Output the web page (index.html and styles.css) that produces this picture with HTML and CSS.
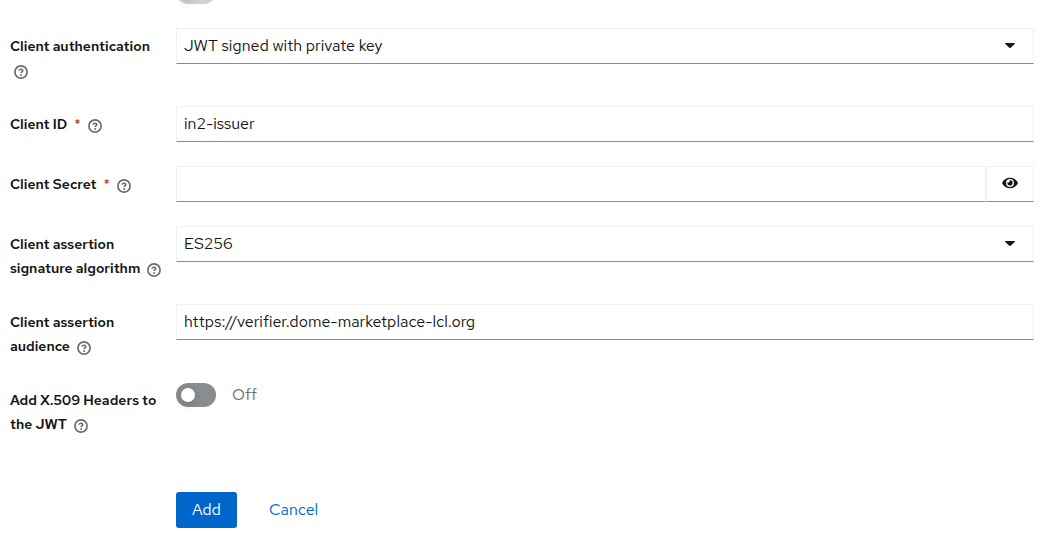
FILE: index.html
```html
<!DOCTYPE html>
<html lang="en">
<head>
<meta charset="utf-8">
<title>Add identity provider</title>
<link rel="stylesheet" href="styles.css">
</head>
<body>
<svg class="sprite" aria-hidden="true">
  <symbol id="help" viewBox="0 0 14 14">
    <circle cx="7" cy="7" r="6.1" fill="none" stroke="currentColor" stroke-width="1.7"/>
    <path d="M5 5.7C5.2 4.6 6 4.2 7 4.2C8 4.2 8.8 4.8 8.8 5.6C8.8 6.8 7.1 6.7 7.1 8.1" fill="none" stroke="currentColor" stroke-width="1.6"/>
    <circle cx="7.1" cy="9.9" r="1" fill="currentColor"/>
  </symbol>
  <symbol id="caret" viewBox="0 0 10 5">
    <path d="M.6 0H9.4Q10.3.2 9.7 1L5.7 4.7Q5 5.3 4.3 4.7L.3 1Q-.3.2.6 0Z" fill="currentColor"/>
  </symbol>
  <symbol id="eye" viewBox="0 0 576 512">
    <path fill="currentColor" d="M572.52 241.4C518.29 135.59 410.93 64 288 64S57.68 135.64 3.48 241.41a32.35 32.35 0 0 0 0 29.19C57.71 376.41 165.07 448 288 448s230.32-71.64 284.52-177.41a32.35 32.35 0 0 0 0-29.19zM288 400a144 144 0 1 1 144-144 143.93 143.93 0 0 1-144 144zm0-240a95.31 95.31 0 0 0-25.31 3.79 47.85 47.85 0 0 1-66.9 66.9A95.78 95.78 0 1 0 288 160z"/>
  </symbol>
</svg>
<form class="form">
  <div class="row">
    <div class="control"><input class="switch" type="checkbox" aria-label="Setting" disabled></div>
  </div>
  <div class="row">
    <div class="label"><label for="auth">Client authentication</label> <button class="help" type="button" aria-label="Help"><svg><use href="#help"/></svg></button></div>
    <div class="control select">
      <select class="field" id="auth"><option>JWT signed with private key</option></select>
      <svg class="caret"><use href="#caret"/></svg>
    </div>
  </div>
  <div class="row">
    <div class="label"><label for="client-id">Client ID <span class="required">*</span></label> <button class="help" type="button" aria-label="Help"><svg><use href="#help"/></svg></button></div>
    <div class="control"><input class="field" id="client-id" type="text" value="in2-issuer"></div>
  </div>
  <div class="row">
    <div class="label"><label for="secret">Client Secret <span class="required">*</span></label> <button class="help" type="button" aria-label="Help"><svg><use href="#help"/></svg></button></div>
    <div class="control">
      <input class="field" id="secret" type="password">
      <button class="reveal" type="button" aria-label="Show password"><svg><use href="#eye"/></svg></button>
    </div>
  </div>
  <div class="row">
    <div class="label"><label for="algorithm">Client assertion signature algorithm</label> <button class="help" type="button" aria-label="Help"><svg><use href="#help"/></svg></button></div>
    <div class="control select">
      <select class="field" id="algorithm"><option>ES256</option></select>
      <svg class="caret"><use href="#caret"/></svg>
    </div>
  </div>
  <div class="row">
    <div class="label"><label for="audience">Client assertion audience</label> <button class="help" type="button" aria-label="Help"><svg><use href="#help"/></svg></button></div>
    <div class="control"><input class="field" id="audience" type="text" value="https://verifier.dome-marketplace-lcl.org"></div>
  </div>
  <div class="row">
    <div class="label"><label for="x509">Add X.509 Headers to the JWT</label> <button class="help" type="button" aria-label="Help"><svg><use href="#help"/></svg></button></div>
    <div class="control toggle"><input class="switch" id="x509" type="checkbox"><span class="state">Off</span></div>
  </div>
  <div class="row actions">
    <div class="control buttons">
      <button class="button primary" type="submit">Add</button>
      <button class="button link" type="button">Cancel</button>
    </div>
  </div>
</form>
</body>
</html>
```
FILE: styles.css
```css
* { box-sizing: border-box; }

body {
  margin: 0;
  background: #fff;
  color: #151515;
  font: 16px/24px "Red Hat Text", Inter, sans-serif;
}

button, input, select { font: inherit; color: inherit; }
button { cursor: pointer; }
.sprite { display: none; }

.form {
  display: grid;
  gap: 24px;
  margin-top: -20px;
  padding: 0 9px 8px 10px;
}

.row {
  display: grid;
  grid-template-columns: 150px 1fr;
  column-gap: 16px;
}

.label {
  padding-top: 6px;
  font-size: 14px;
  font-weight: 600;
}

.required { margin-left: 4px; color: #c9190b; font-weight: 400; }

.help {
  display: inline-flex;
  margin: -3px -8px -5px 0;
  padding: 4px;
  border: 0;
  background: none;
  color: #6a6e73;
  vertical-align: middle;
}
.help svg { width: 14px; height: 14px; }

.control {
  grid-column: 2;
  display: flex;
  align-items: flex-start;
  min-width: 0;
}

.field {
  flex: 1;
  min-width: 0;
  height: 36px;
  padding: 0 7px;
  border: 1px solid #f0f0f0;
  border-bottom-color: #8a8d90;
  border-radius: 0;
  background: #fff;
  appearance: none;
}
input.field { padding-bottom: 2px; }

.select { position: relative; }
.caret {
  position: absolute;
  top: 15px;
  right: 19px;
  width: 10px;
  height: 5px;
  pointer-events: none;
}

.reveal {
  display: flex;
  align-items: center;
  justify-content: center;
  width: 48px;
  height: 36px;
  padding: 0 0 2px;
  border: 1px solid #f0f0f0;
  border-bottom-color: #8a8d90;
  background: #fff;
}
.reveal svg { width: 16px; height: 14px; }

.switch {
  display: flex;
  align-items: center;
  width: 40px;
  height: 24px;
  margin: 0;
  padding: 0 5px;
  border-radius: 12px;
  background: #8a8d90;
  appearance: none;
}
.switch::before {
  content: "";
  width: 14px;
  height: 14px;
  border-radius: 50%;
  background: #fff;
  box-shadow: 0 4px 8px rgba(3, 3, 3, .12), 0 0 4px rgba(3, 3, 3, .06);
}
.switch:disabled { background: #d2d2d2; }
.switch:checked { background: #06c; }

.toggle { gap: 16px; padding-top: 1px; }
.state { color: #6a6e73; }

.actions { margin-top: 32px; }
.buttons { gap: 16px; }

.button {
  padding: 6px 16px;
  border: 0;
  border-radius: 3px;
}
.primary { background: #06c; color: #fff; }
.link { background: none; color: #06c; }
```
